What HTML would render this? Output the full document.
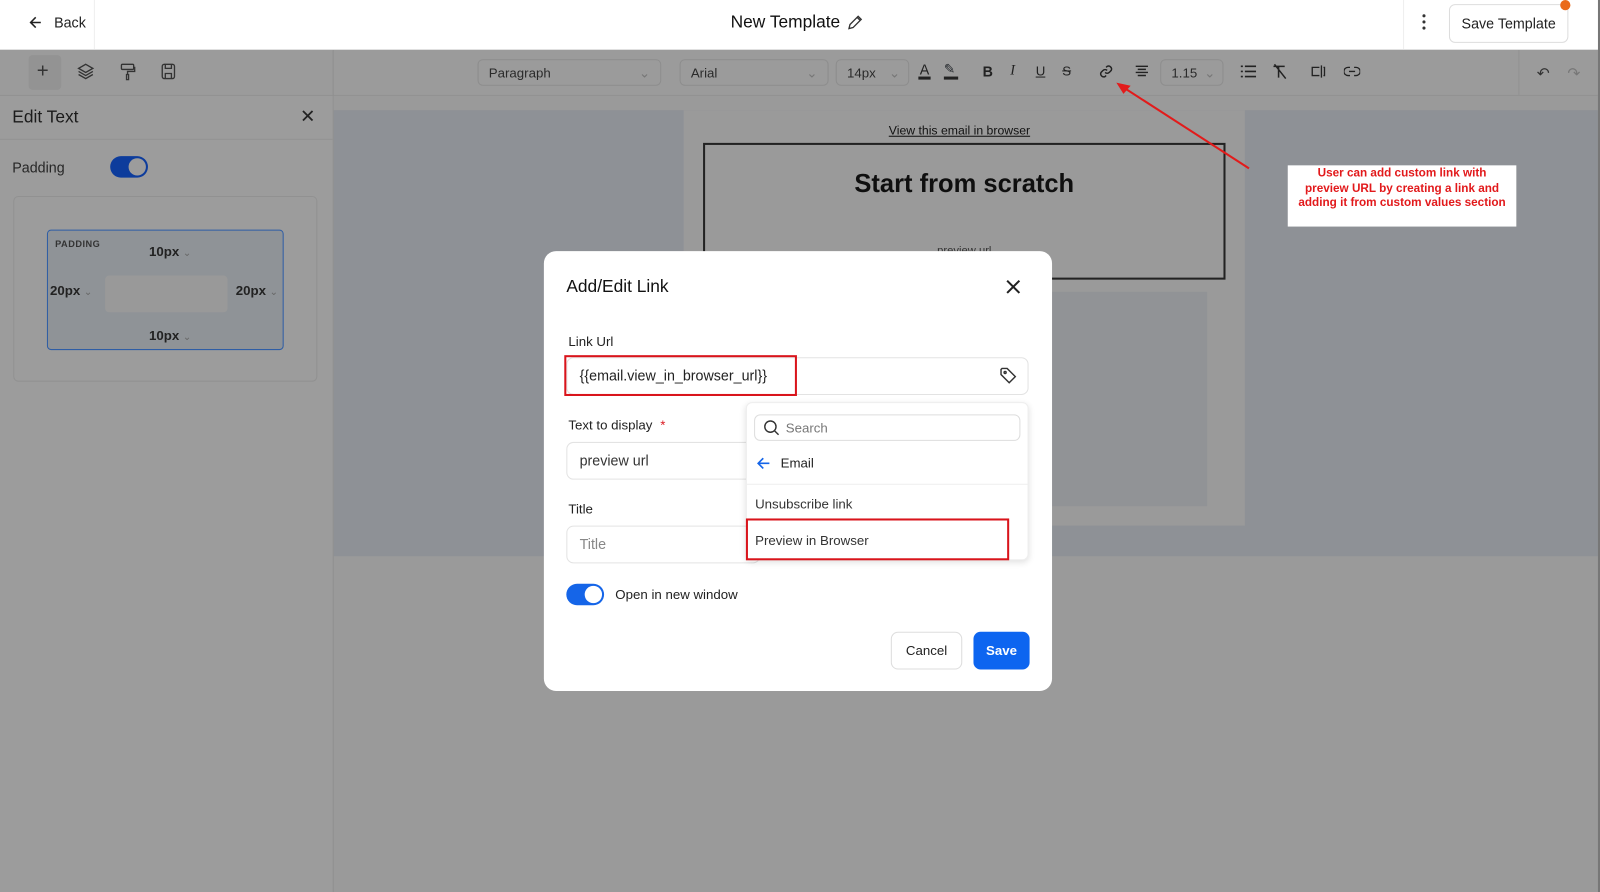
<!DOCTYPE html>
<html><head><meta charset="utf-8"><style>
html,body{margin:0;padding:0;width:1600px;height:892px;overflow:hidden;background:#999;}
#w{position:absolute;left:0;top:0;width:1568px;height:874px;transform:scale(1.02041,1.0206);transform-origin:0 0;font-family:"Liberation Sans",Arial,sans-serif;color:#1f2328;background:#9a9a9a;}
.a{position:absolute}
.t{font-size:14px;color:#222}
svg{display:block}
</style></head><body><div id="w">
<div class="a" style="left:0;top:0;width:1568px;height:48px;background:#fff;border-bottom:1px solid #e0e0e0"></div>
<div class="a" style="left:92px;top:0;width:1px;height:48px;background:#eee"></div>
<div class="a" style="left:28px;top:14px"><svg width="14" height="16" viewBox="0 0 14 16"><path d="M12 8H2M7 3L2 8l5 5" stroke="#222" stroke-width="1.5" fill="none"/></svg></div>
<div class="a t" style="left:53px;top:14px;font-size:14px">Back</div>
<div class="a" style="left:716px;top:12px;font-size:17px;color:#111">New Template</div>
<div class="a" style="left:829px;top:13px"><svg width="18" height="18" viewBox="0 0 18 18"><path d="M3 15l1-4 8-8 3 3-8 8zM11 4l3 3" stroke="#333" stroke-width="1.3" fill="none"/></svg></div>
<div class="a" style="left:1394px;top:14px;width:4px"><div style="width:3px;height:3px;background:#333;border-radius:2px;margin-bottom:3px"></div><div style="width:3px;height:3px;background:#333;border-radius:2px;margin-bottom:3px"></div><div style="width:3px;height:3px;background:#333;border-radius:2px"></div></div>
<div class="a" style="left:1375px;top:0;width:1px;height:48px;background:#eee"></div>
<div class="a" style="left:1420px;top:4px;width:115px;height:36px;border:1px solid #ddd;border-radius:6px;background:#fff;font-size:14px;line-height:36px;text-align:center;color:#222">Save Template</div>
<div class="a" style="left:1529px;top:0;width:10px;height:10px;border-radius:5px;background:#ea6a1a"></div>
<div class="a" style="left:0;top:49px;width:1568px;height:44px;background:#9b9b9b;border-bottom:1px solid #929292"></div>
<div class="a" style="left:326px;top:49px;width:1px;height:825px;background:#8f8f8f"></div>
<div class="a" style="left:28px;top:54px;width:32px;height:34px;background:#939393;border-radius:4px"></div>
<div class="a" style="left:36px;top:62px;font-size:20px;color:#333;line-height:16px">+</div>
<div class="a" style="left:75px;top:61px"><svg width="18" height="18" viewBox="0 0 18 18" fill="none" stroke="#333" stroke-width="1.3"><path d="M9 2l7 4-7 4-7-4zM2 9l7 4 7-4M2 12l7 4 7-4"/></svg></div>
<div class="a" style="left:116px;top:61px"><svg width="18" height="18" viewBox="0 0 18 18" fill="none" stroke="#333" stroke-width="1.3"><rect x="3" y="2" width="12" height="5" rx="1"/><path d="M15 5h1v4H9v3M8 12h2v5H8z"/></svg></div>
<div class="a" style="left:156px;top:61px"><svg width="18" height="18" viewBox="0 0 18 18" fill="none" stroke="#333" stroke-width="1.3"><rect x="3" y="2" width="12" height="14" rx="2"/><path d="M6 2v4h6V2M6 16v-5h6v5"/></svg></div>
<div class="a" style="left:468px;top:58px;width:180px;height:26px;border:1px solid #8d8d8d;border-radius:5px;font-size:13px;line-height:26px;padding-left:10px;box-sizing:border-box;color:#2a2a2a">Paragraph<span style="position:absolute;right:10px;color:#777">⌄</span></div>
<div class="a" style="left:666px;top:58px;width:146px;height:26px;border:1px solid #8d8d8d;border-radius:5px;font-size:13px;line-height:26px;padding-left:10px;box-sizing:border-box;color:#2a2a2a">Arial<span style="position:absolute;right:10px;color:#777">⌄</span></div>
<div class="a" style="left:819px;top:58px;width:72px;height:26px;border:1px solid #8d8d8d;border-radius:5px;font-size:13px;line-height:26px;padding-left:10px;box-sizing:border-box;color:#2a2a2a">14px<span style="position:absolute;right:8px;color:#777">⌄</span></div>
<div class="a" style="left:900px;top:61px;font-size:14px;color:#222;border-bottom:3px solid #222;line-height:14px;width:12px;text-align:center">A</div>
<div class="a" style="left:925px;top:61px;width:14px;height:14px;border-bottom:3px solid #222;font-size:13px;line-height:13px">✎</div>
<div class="a" style="left:963px;top:62px;font-size:14px;font-weight:bold;color:#222">B</div>
<div class="a" style="left:990px;top:62px;font-size:14px;font-style:italic;color:#222;font-family:'Liberation Serif'">I</div>
<div class="a" style="left:1015px;top:62px;font-size:13px;text-decoration:underline;color:#222">U</div>
<div class="a" style="left:1041px;top:62px;font-size:13px;text-decoration:line-through;color:#222">S</div>
<div class="a" style="left:1076px;top:62px"><svg width="16" height="16" viewBox="0 0 16 16" fill="none" stroke="#222" stroke-width="1.4"><path d="M7 9a3 3 0 004 0l2-2a3 3 0 00-4-4L8 4M9 7a3 3 0 00-4 0L3 9a3 3 0 004 4l1-1"/></svg></div>
<div class="a" style="left:1112px;top:64px"><svg width="14" height="12" stroke="#222" stroke-width="1.4"><path d="M1 1h12M3 4h8M1 7h12M3 10h8"/></svg></div>
<div class="a" style="left:1137px;top:58px;width:62px;height:26px;border:1px solid #8d8d8d;border-radius:5px;font-size:13px;line-height:26px;padding-left:10px;box-sizing:border-box;color:#2a2a2a">1.15<span style="position:absolute;right:7px;color:#777">⌄</span></div>
<div class="a" style="left:1215px;top:63px"><svg width="16" height="14" stroke="#222" stroke-width="1.6"><path d="M5 2h11M5 7h11M5 12h11M1 2h2M1 7h2M1 12h2"/></svg></div>
<div class="a" style="left:1246px;top:62px"><svg width="16" height="16" fill="none" stroke="#222" stroke-width="1.5"><path d="M2 3h11M7 3v11M3 1l11 14"/></svg></div>
<div class="a" style="left:1284px;top:63px"><svg width="16" height="14" fill="none" stroke="#222" stroke-width="1.3"><path d="M9 3H2v8h7M11 1v12M13 3h1v8h-1"/></svg></div>
<div class="a" style="left:1317px;top:64px"><svg width="16" height="12" fill="none" stroke="#222" stroke-width="1.3"><path d="M6 2H4a4 4 0 000 8h2M10 2h2a4 4 0 010 8h-2M5 6h6"/></svg></div>
<div class="a" style="left:1488px;top:49px;width:1px;height:44px;background:#929292"></div>
<div class="a" style="left:1506px;top:63px;font-size:15px;color:#333">↶</div>
<div class="a" style="left:1536px;top:63px;font-size:15px;color:#777">↷</div>
<div class="a" style="left:0;top:94px;width:326px;height:780px;background:#9c9c9c"></div>
<div class="a" style="left:12px;top:105px;font-size:17px;color:#1b1b1b">Edit Text</div>
<div class="a" style="left:294px;top:104px;font-size:18px;color:#222">✕</div>
<div class="a" style="left:0;top:136px;width:326px;height:1px;background:#929292"></div>
<div class="a" style="left:12px;top:156px;font-size:14px;color:#262626">Padding</div>
<div class="a" style="left:108px;top:153px;width:37px;height:21px;border-radius:11px;background:#0d3c9c"><div style="position:absolute;right:2px;top:2px;width:17px;height:17px;border-radius:9px;background:#9c9c9c"></div></div>
<div class="a" style="left:13px;top:192px;width:298px;height:182px;border:1px solid #919191;border-radius:5px;box-sizing:border-box"></div>
<div class="a" style="left:46px;top:225px;width:232px;height:118px;border:1px solid #2e5da5;border-radius:4px;background:#8f9397;box-sizing:border-box"></div>
<div class="a" style="left:54px;top:234px;font-size:9px;font-weight:bold;color:#333;letter-spacing:.5px">PADDING</div>
<div class="a" style="left:146px;top:239px;font-size:13px;font-weight:bold;color:#222">10px <span style="color:#666;font-weight:normal;font-size:10px">⌄</span></div>
<div class="a" style="left:146px;top:321px;font-size:13px;font-weight:bold;color:#222">10px <span style="color:#666;font-weight:normal;font-size:10px">⌄</span></div>
<div class="a" style="left:49px;top:277px;font-size:13px;font-weight:bold;color:#222">20px <span style="color:#666;font-weight:normal;font-size:10px">⌄</span></div>
<div class="a" style="left:231px;top:277px;font-size:13px;font-weight:bold;color:#222">20px <span style="color:#666;font-weight:normal;font-size:10px">⌄</span></div>
<div class="a" style="left:103px;top:270px;width:120px;height:36px;background:#999;border-radius:4px"></div>
<div class="a" style="left:327px;top:94px;width:1241px;height:14px;background:#9a9a9a"></div>
<div class="a" style="left:327px;top:108px;width:1241px;height:437px;background:#8e9196"></div>
<div class="a" style="left:670px;top:108px;width:550px;height:407px;background:#9a9a9a"></div>
<div class="a" style="left:1030px;top:286px;width:153px;height:210px;background:#919396"></div>
<div class="a" style="left:871px;top:121px;font-size:12px;color:#111;text-decoration:underline">View this email in browser</div>
<div class="a" style="left:689px;top:140px;width:512px;height:134px;border:2px solid #222;box-sizing:border-box"></div>
<div class="a" style="left:689px;top:166px;width:512px;text-align:center;font-size:25px;font-weight:bold;color:#0f0f0f">Start from scratch</div>
<div class="a" style="left:689px;top:240px;width:512px;text-align:center;font-size:11px;color:#333">preview url</div>
<div class="a" style="left:1262px;top:162px;width:224px;height:60px;background:#fff"></div>
<div class="a" style="left:1270px;top:163px;width:208px;color:#e2191b;font-weight:bold;font-size:11.5px;line-height:14.5px;text-align:center">User can add custom link with preview URL by creating a link and adding it from custom values section</div>
<svg class="a" style="left:1080px;top:75px" width="150" height="95"><path d="M144 90L20 10" stroke="#e21b1b" stroke-width="2"/><path d="M14 6l14 3-7 8z" fill="#e21b1b"/></svg>
<div class="a" style="left:1566px;top:0;width:2px;height:874px;background:#777"></div>
<div class="a" style="left:533px;top:246px;width:498px;height:431px;background:#fff;border-radius:12px"></div>
<div class="a" style="left:555px;top:271px;font-size:17px;color:#111">Add/Edit Link</div>
<div class="a" style="left:984px;top:272px"><svg width="18" height="18" stroke="#222" stroke-width="2"><path d="M3 3l12 12M15 3L3 15"/></svg></div>
<div class="a t" style="left:557px;top:327px;font-size:13px">Link Url</div>
<div class="a" style="left:555px;top:350px;width:453px;height:37px;border:1px solid #e3e3e3;border-radius:7px;box-sizing:border-box"></div>
<div class="a" style="left:553px;top:348px;width:228px;height:40px;border:2px solid #d9141b;box-sizing:border-box"></div>
<div class="a" style="left:568px;top:360px;font-size:14px;color:#222">{{email.view_in_browser_url}}</div>
<div class="a" style="left:978px;top:358px"><svg width="20" height="20" fill="none" stroke="#333" stroke-width="1.4"><path d="M3 4v5l8 8 6-6-8-8H4z"/><circle cx="7" cy="7" r="1"/></svg></div>
<div class="a t" style="left:557px;top:409px;font-size:13px">Text to display <span style="color:#d9141b;margin-left:4px">*</span></div>
<div class="a" style="left:555px;top:433px;width:190px;height:37px;border:1px solid #e3e3e3;border-radius:7px;box-sizing:border-box"></div>
<div class="a" style="left:568px;top:443px;font-size:14px;color:#333">preview url</div>
<div class="a t" style="left:557px;top:491px;font-size:13px">Title</div>
<div class="a" style="left:555px;top:515px;width:190px;height:37px;border:1px solid #e3e3e3;border-radius:7px;box-sizing:border-box"></div>
<div class="a" style="left:568px;top:525px;font-size:14px;color:#888">Title</div>
<div class="a" style="left:555px;top:572px;width:37px;height:21px;border-radius:11px;background:#1565e8"><div style="position:absolute;right:2px;top:2px;width:17px;height:17px;border-radius:9px;background:#fff"></div></div>
<div class="a" style="left:603px;top:575px;font-size:13px;color:#222">Open in new window</div>
<div class="a" style="left:873px;top:619px;width:70px;height:37px;border:1px solid #ddd;border-radius:7px;box-sizing:border-box;text-align:center;line-height:35px;font-size:13px;color:#222">Cancel</div>
<div class="a" style="left:954px;top:619px;width:55px;height:37px;border-radius:7px;background:#0d65f0;text-align:center;line-height:37px;font-size:13px;color:#fff;font-weight:bold">Save</div>
<div class="a" style="left:731px;top:394px;width:277px;height:155px;background:#fff;border-radius:6px;box-shadow:0 2px 6px rgba(0,0,0,.12);border:1px solid #eee;box-sizing:border-box"></div>
<div class="a" style="left:739px;top:406px;width:261px;height:26px;border:1px solid #ddd;border-radius:6px;box-sizing:border-box"></div>
<div class="a" style="left:748px;top:411px"><svg width="16" height="16" fill="none" stroke="#333" stroke-width="1.4"><circle cx="7" cy="7" r="5.5"/><path d="M11 11l4 4"/></svg></div>
<div class="a" style="left:770px;top:412px;font-size:13px;color:#777">Search</div>
<div class="a" style="left:741px;top:447px"><svg width="14" height="14" fill="none" stroke="#1565e8" stroke-width="1.6"><path d="M13 7H2M7 2L2 7l5 5"/></svg></div>
<div class="a" style="left:765px;top:446px;font-size:13px;color:#222">Email</div>
<div class="a" style="left:732px;top:474px;width:275px;height:1px;background:#eee"></div>
<div class="a" style="left:740px;top:486px;font-size:13px;color:#333">Unsubscribe link</div>
<div class="a" style="left:731px;top:508px;width:258px;height:41px;border:2px solid #d9141b;box-sizing:border-box"></div>
<div class="a" style="left:740px;top:522px;font-size:13px;color:#333">Preview in Browser</div>
</div></body></html>
